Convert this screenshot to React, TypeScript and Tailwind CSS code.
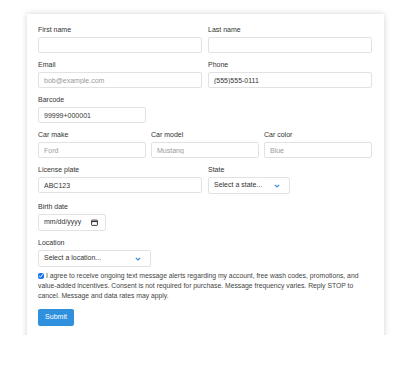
import React from 'react';

const font = { fontFamily: '"Liberation Sans", Arial, sans-serif' };

const Label = ({ children }: { children: React.ReactNode }) => (
  <label className="block text-[7px] leading-[10px] text-[#333] mb-[2px]">{children}</label>
);

const Input = ({ placeholder, value, className = '' }: { placeholder?: string; value?: string; className?: string }) => (
  <input
    readOnly
    placeholder={placeholder}
    defaultValue={value}
    className={`block h-4 w-full border border-[#e2e2e2] rounded-[2px] px-[5px] text-[7px] text-[#333] placeholder:text-[#9a9a9a] bg-white outline-none ${className}`}
  />
);

const Select = ({ label, className = '' }: { label: string; className?: string }) => (
  <div className={`flex items-center justify-between h-[17px] border border-[#e2e2e2] rounded-[2px] pl-[5px] pr-[9px] bg-white ${className}`}>
    <span className="text-[7px] text-[#333]">{label}</span>
    <svg width="6" height="4" viewBox="0 0 6 4" fill="none">
      <path d="M0.8 0.8 L3 3 L5.2 0.8" stroke="#3a8ed8" strokeWidth="1.2" />
    </svg>
  </div>
);

const App = () => {
  return (
    <div className="w-[413px] h-[383px] bg-white" style={font}>
      <div className="h-[335px] overflow-hidden pl-[27px] pr-[29px] pt-[14px]">
        <div className="bg-white shadow-[0_0_6px_rgba(0,0,0,0.18)] pl-[11px] pr-[12px] pt-[11px] pb-10">
          <div className="grid grid-cols-2 gap-x-[6px]">
            <div className="mb-[7px]">
              <Label>First name</Label>
              <Input />
            </div>
            <div className="mb-[7px]">
              <Label>Last name</Label>
              <Input />
            </div>
            <div className="mb-[7px]">
              <Label>Email</Label>
              <Input placeholder="bob@example.com" />
            </div>
            <div className="mb-[7px]">
              <Label>Phone</Label>
              <Input value="(555)555-0111" />
            </div>
          </div>

          <div className="mb-[7px]">
            <Label>Barcode</Label>
            <Input value="99999+000001" className="!w-[108px]" />
          </div>

          <div className="grid grid-cols-3 gap-x-[5px] mb-[7px]">
            <div>
              <Label>Car make</Label>
              <Input placeholder="Ford" />
            </div>
            <div>
              <Label>Car model</Label>
              <Input placeholder="Mustang" />
            </div>
            <div>
              <Label>Car color</Label>
              <Input placeholder="Blue" />
            </div>
          </div>

          <div className="grid grid-cols-2 gap-x-[6px] mb-[8px]">
            <div>
              <Label>License plate</Label>
              <Input value="ABC123" />
            </div>
            <div>
              <Label>State</Label>
              <Select label="Select a state..." className="w-[82px]" />
            </div>
          </div>

          <div className="mb-[7px]">
            <Label>Birth date</Label>
            <div className="flex items-center justify-between h-[17px] w-[68px] border border-[#e2e2e2] rounded-[2px] pl-[5px] pr-[7px] bg-white">
              <span className="text-[7px] text-[#333]">mm/dd/yyyy</span>
              <svg width="7" height="7" viewBox="0 0 7 7" fill="none">
                <rect x="0.6" y="1.1" width="5.8" height="5.3" rx="0.6" stroke="#222" strokeWidth="0.9" />
                <path d="M0.6 2.6 H6.4" stroke="#222" strokeWidth="1" />
              </svg>
            </div>
          </div>

          <div className="mb-[4px]">
            <Label>Location</Label>
            <Select label="Select a location..." className="w-[113px]" />
          </div>

          <p className="text-[6.8px] leading-[10px] text-[#444]">
            <input type="checkbox" defaultChecked className="w-[6px] h-[6px] m-0 mr-[2px] align-[-0.5px] accent-[#1a73e8]" />
            I agree to receive ongoing text message alerts regarding my account, free wash codes, promotions, and
            value-added incentives. Consent is not required for purchase. Message frequency varies. Reply STOP to
            cancel. Message and data rates may apply.
          </p>

          <button className="mt-[8px] h-[17px] w-[36px] rounded-[2px] bg-[#2f90de] text-white text-[7px]">Submit</button>
        </div>
      </div>
    </div>
  );
};

export default App;
